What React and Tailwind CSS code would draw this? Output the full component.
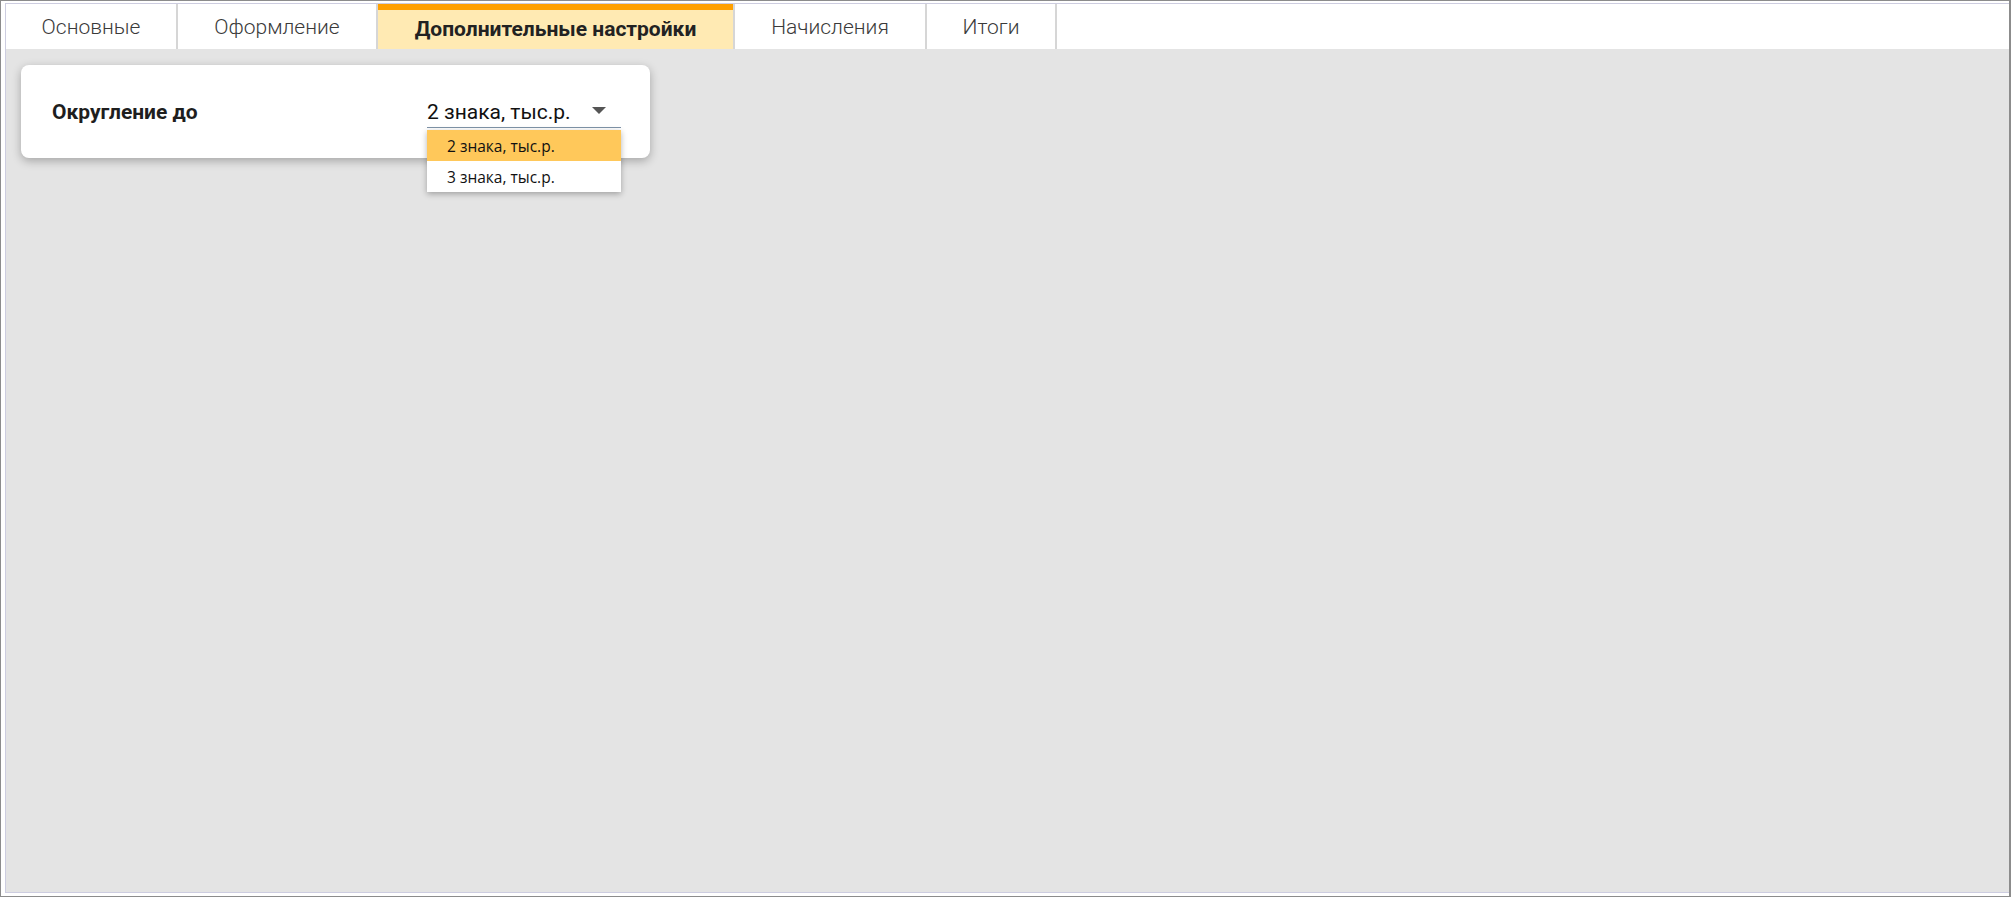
import React from "react";

const tabs = [
  { label: "Основные", w: "w-[172px]" },
  { label: "Оформление", w: "w-[200px]" },
  { label: "Дополнительные настройки", w: "w-[357px]", active: true },
  { label: "Начисления", w: "w-[192px]" },
  { label: "Итоги", w: "w-[130px]" },
];

export default function App() {
  return (
    <div className="w-[2011px] h-[897px] bg-white border-l border-t border-b border-r-2 border-[#8c8c8c] pl-[4px] pt-[2px] pb-[3px] flex">
      <div className="flex-1 flex flex-col border-l border-t border-b border-[#cdcde0] bg-[#e4e4e4] min-w-0">
        <div className="h-[45px] bg-white flex shrink-0" style={{ fontFamily: "Roboto, sans-serif" }}>
          {tabs.map((t) =>
            t.active ? (
              <div
                key={t.label}
                className={`${t.w} h-full border-r-2 border-[#d6d6d6] bg-[#ffeab3] flex flex-col`}
              >
                <div className="h-[6px] bg-[#ffa000] shrink-0" />
                <div className="flex-1 flex items-center justify-center text-[21px] font-bold text-[#222222]">
                  {t.label}
                </div>
              </div>
            ) : (
              <div
                key={t.label}
                className={`${t.w} h-full border-r-2 border-[#d6d6d6] flex items-center justify-center pt-[2px] text-[21px] font-light text-[#3a3a3a]`}
              >
                {t.label}
              </div>
            )
          )}
        </div>
        <div className="flex-1 pl-[15px] pt-[16px]">
          <div className="relative w-[629px] h-[93px] bg-white rounded-[8px] shadow-[0_3px_10px_rgba(0,0,0,0.28)] pl-[31px] pt-[35px] flex" style={{ fontFamily: "Roboto, sans-serif" }}>
            <div className="w-[375px] h-[24px] leading-[24px] text-[21px] font-bold text-[#1e1e1e]">
              Округление до
            </div>
            <div className="relative w-[194px] h-[28px] border-b border-[#7f93a8] pb-[3px] flex items-start">
              <span className="text-[21px] leading-[24px] text-[#111111]">2 знака, тыс.р.</span>
              <svg className="absolute left-[165px] top-[7px]" width="14" height="7" viewBox="0 0 14 7">
                <path d="M0 0 L14 0 L7 7 Z" fill="#555555" />
              </svg>
              <div
                className="absolute left-0 top-[30px] w-[194px] bg-white shadow-[0_2px_6px_rgba(0,0,0,0.3)] z-10"
                style={{ fontFamily: "'Segoe UI', 'Open Sans', sans-serif" }}
              >
                <div className="h-[31px] bg-[#ffc85a] pl-[20px] pt-[2px] flex items-center text-[15.5px] text-[#111111]">
                  2 знака, тыс.р.
                </div>
                <div className="h-[31px] pl-[20px] pt-[2px] flex items-center text-[15.5px] text-[#111111]">
                  3 знака, тыс.р.
                </div>
              </div>
            </div>
          </div>
        </div>
      </div>
    </div>
  );
}
